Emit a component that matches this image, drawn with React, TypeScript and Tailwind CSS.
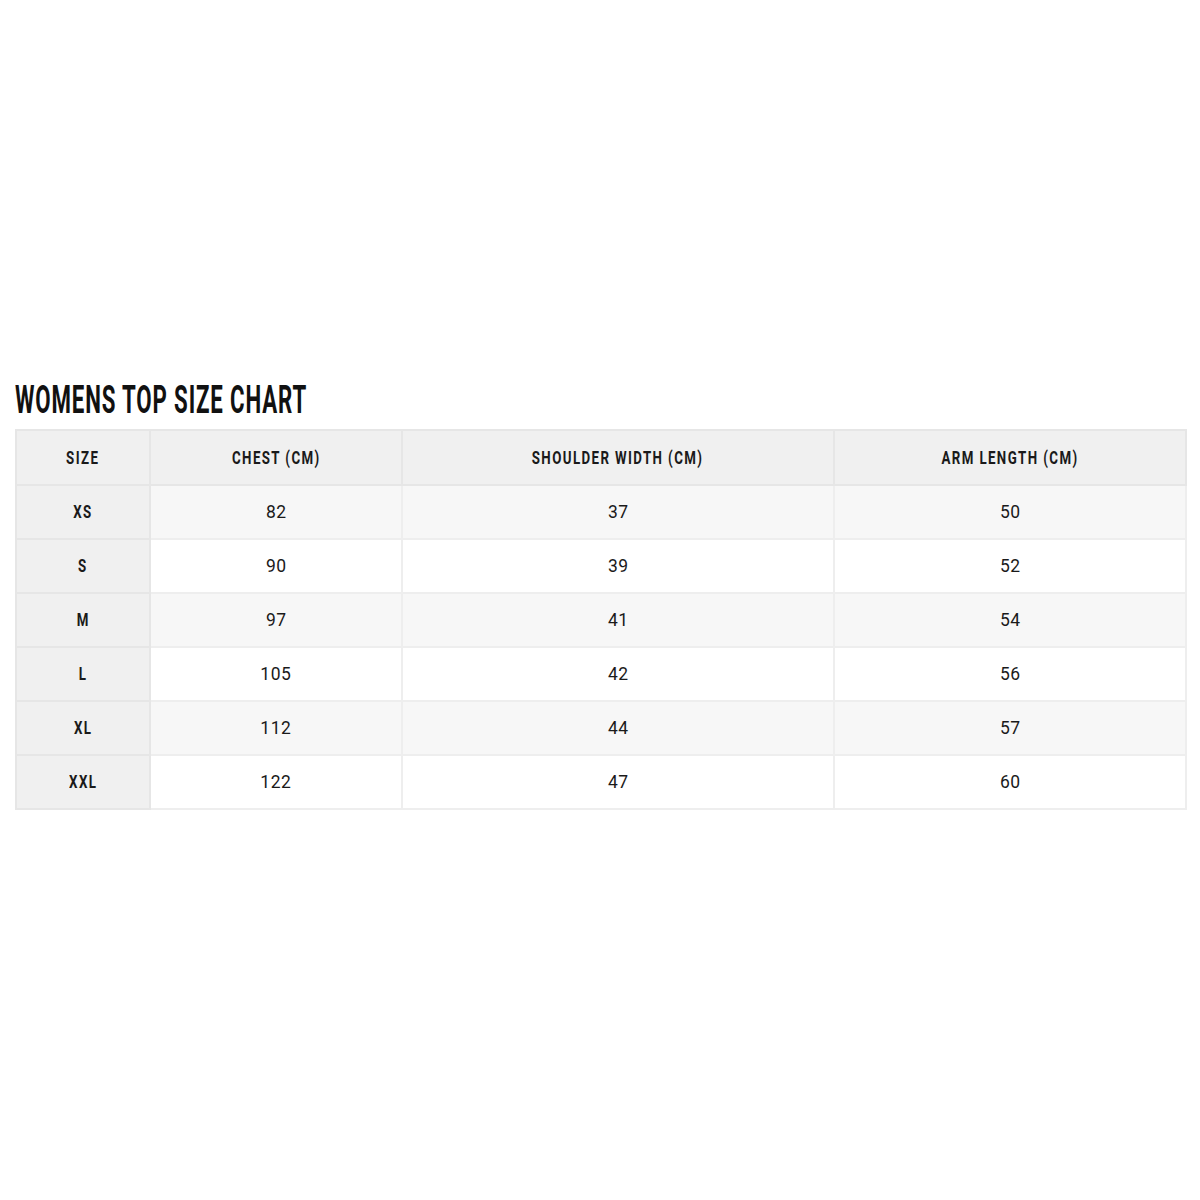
const ROWS: [string, number, number, number][] = [
  ["XS", 82, 37, 50],
  ["S", 90, 39, 52],
  ["M", 97, 41, 54],
  ["L", 105, 42, 56],
  ["XL", 112, 44, 57],
  ["XXL", 122, 47, 60],
];

// no condensed face installed, so squeeze Roboto bold horizontally
function Narrow({ children, className = "" }: { children: React.ReactNode; className?: string }) {
  return <span className={`inline-block whitespace-nowrap font-['Roboto',sans-serif] font-bold uppercase ${className}`}>{children}</span>;
}

export default function App() {
  return (
    <div className="h-[1200px] w-[1200px] bg-white px-[15px] pt-[380px]">
      <h1 className="h-[36px] text-[39px] leading-[36px] text-[#111]">
        <Narrow className="origin-left scale-x-[0.57] tracking-[1.5px]">Womens Top Size Chart</Narrow>
      </h1>
      <table className="mt-[13px] w-[1170px] table-fixed border-collapse text-[#1a1a1a]">
        <colgroup>
          <col className="w-[134px]" />
          <col className="w-[252px]" />
          <col className="w-[432px]" />
          <col className="w-[352px]" />
        </colgroup>
        <thead>
          <tr className="h-[55px] bg-[#f0f0f0]">
            {["Size", "Chest (cm)", "Shoulder Width (cm)", "Arm Length (cm)"].map((h) => (
              <th key={h} className="border-2 border-[#e6e6e6] text-center text-[19px]">
                <Narrow className="scale-x-[0.7] tracking-[2px]">{h}</Narrow>
              </th>
            ))}
          </tr>
        </thead>
        <tbody>
          {ROWS.map(([size, chest, shoulder, arm], i) => (
            <tr key={size} className={`h-[54px] ${i % 2 === 0 ? "bg-[#f7f7f7]" : "bg-white"}`}>
              <td className="border-2 border-[#e6e6e6] bg-[#f0f0f0] text-center text-[19px]">
                <Narrow className="scale-x-[0.7] tracking-[2px]">{size}</Narrow>
              </td>
              {[chest, shoulder, arm].map((v, j) => (
                <td key={j} className="border-2 border-[#eeeeee] text-center font-['Roboto',sans-serif] text-[19px]">
                  <span className="inline-block scale-x-[0.92] tracking-[0.5px]">{v}</span>
                </td>
              ))}
            </tr>
          ))}
        </tbody>
      </table>
    </div>
  );
}
